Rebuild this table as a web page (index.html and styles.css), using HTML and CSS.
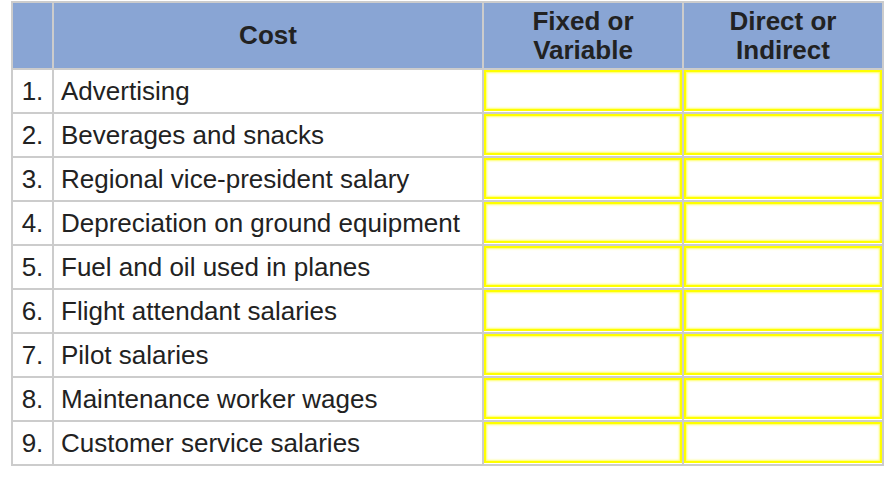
FILE: index.html
```html
<!DOCTYPE html>
<html>
<head>
<meta charset="utf-8">
<link rel="stylesheet" href="styles.css">
</head>
<body>
<div class="sheet">
  <div class="head"></div>
  <div class="head">Cost</div>
  <div class="head">Fixed or<br>Variable</div>
  <div class="head">Direct or<br>Indirect</div>

  <div class="num">1.</div><div class="cost">Advertising</div><div class="field"><input class="box" type="text"></div><div class="field"><input class="box" type="text"></div>
  <div class="num">2.</div><div class="cost">Beverages and snacks</div><div class="field"><input class="box" type="text"></div><div class="field"><input class="box" type="text"></div>
  <div class="num">3.</div><div class="cost">Regional vice-president salary</div><div class="field"><input class="box" type="text"></div><div class="field"><input class="box" type="text"></div>
  <div class="num">4.</div><div class="cost">Depreciation on ground equipment</div><div class="field"><input class="box" type="text"></div><div class="field"><input class="box" type="text"></div>
  <div class="num">5.</div><div class="cost">Fuel and oil used in planes</div><div class="field"><input class="box" type="text"></div><div class="field"><input class="box" type="text"></div>
  <div class="num">6.</div><div class="cost">Flight attendant salaries</div><div class="field"><input class="box" type="text"></div><div class="field"><input class="box" type="text"></div>
  <div class="num">7.</div><div class="cost">Pilot salaries</div><div class="field"><input class="box" type="text"></div><div class="field"><input class="box" type="text"></div>
  <div class="num">8.</div><div class="cost">Maintenance worker wages</div><div class="field"><input class="box" type="text"></div><div class="field"><input class="box" type="text"></div>
  <div class="num">9.</div><div class="cost">Customer service salaries</div><div class="field"><input class="box" type="text"></div><div class="field"><input class="box" type="text"></div>
</div>
</body>
</html>
```
FILE: styles.css
```css
html, body {
  margin: 0;
  padding: 0;
  background: #ffffff;
}
body {
  font-family: "Liberation Sans", Arial, Helvetica, sans-serif;
  color: #222222;
}
.sheet {
  display: grid;
  grid-template-columns: 39px 428px 198px 198px;
  grid-template-rows: 65px repeat(9, 42px);
  gap: 2px;
  padding: 2px;
  background: #cccccc;
  width: max-content;
  margin: 1px 0 0 11px;
}
.head {
  background: #89a5d4;
  font-weight: bold;
  font-size: 26px;
  line-height: 29px;
  text-align: center;
  display: flex;
  align-items: center;
  justify-content: center;
  color: #222222;
}
.num, .cost {
  background: #ffffff;
  font-size: 26px;
  display: flex;
  align-items: center;
}
.num {
  justify-content: center;
}
.cost {
  padding-left: 7px;
}
.field {
  background: #ffffff;
  display: flex;
}
.box {
  flex: 1;
  margin: 0;
  padding: 0;
  width: 100%;
  height: 41px;
  box-sizing: border-box;
  border: 2px solid #ffff00;
  box-shadow: inset 0 0 2px 1px #ffff66;
  background: #ffffff;
  outline: none;
}
```
